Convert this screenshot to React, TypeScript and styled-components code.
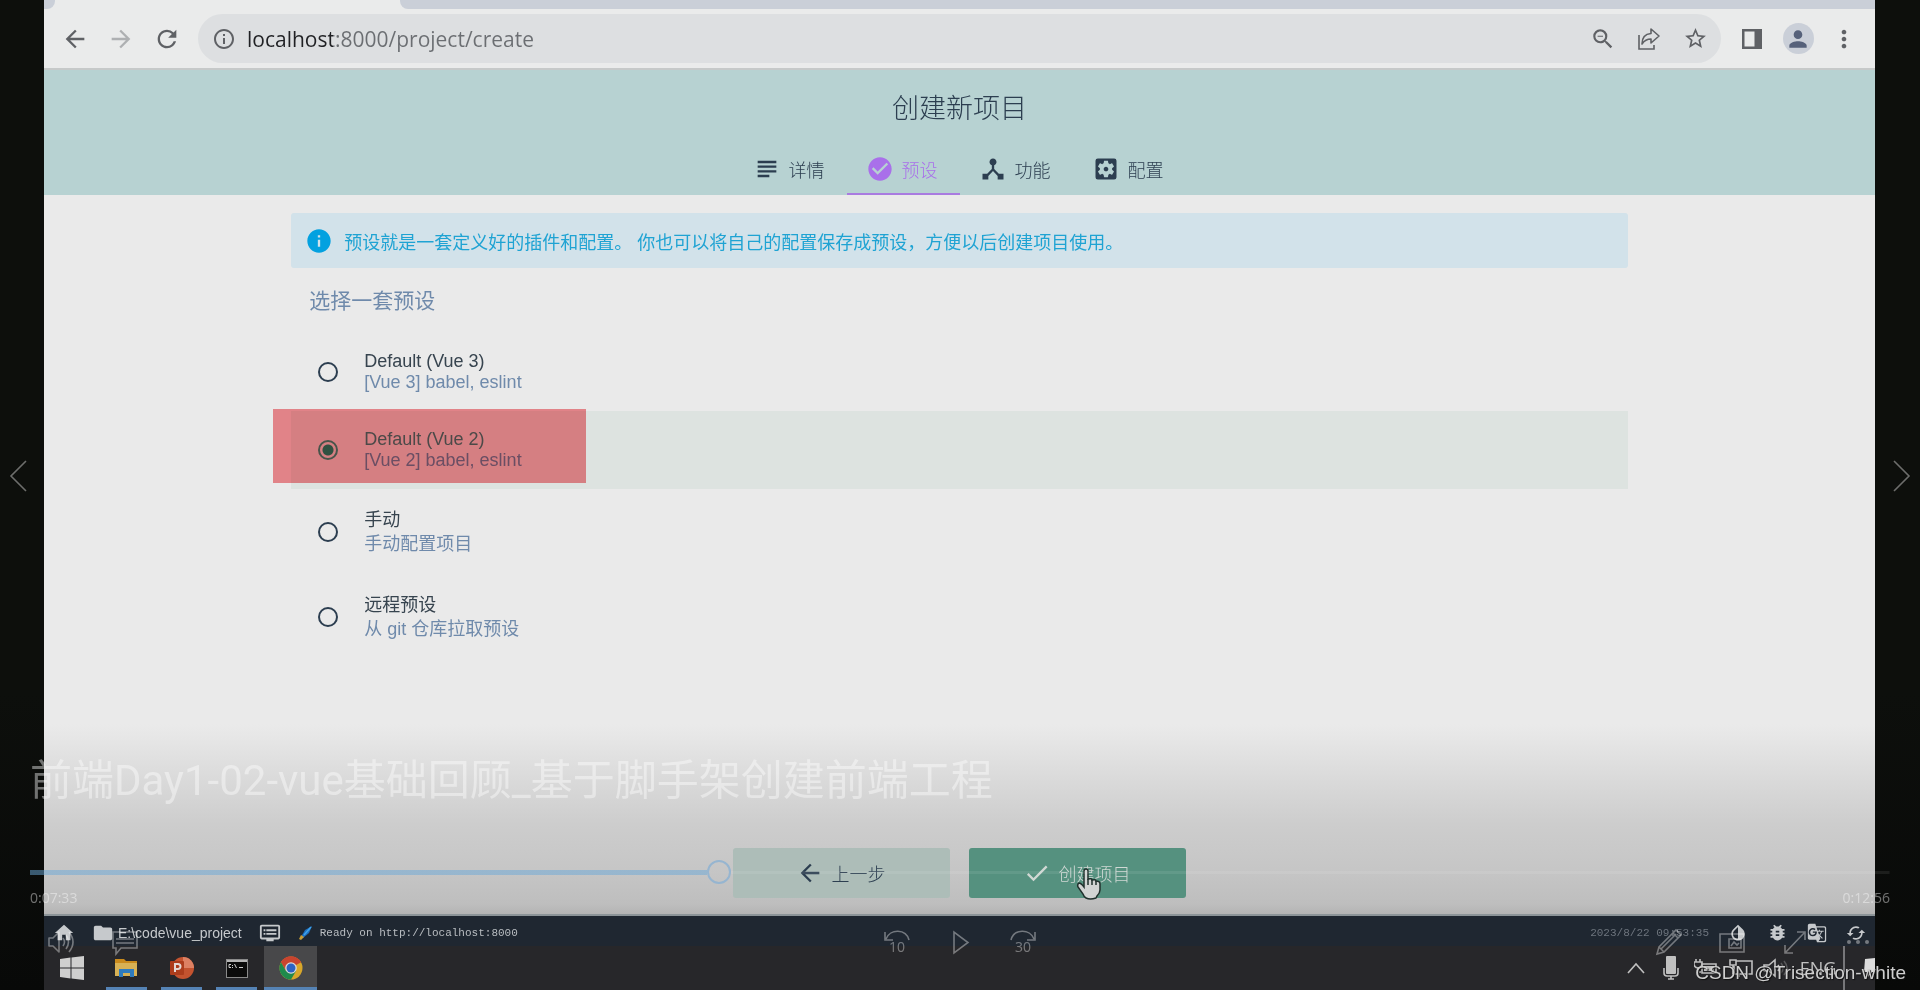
import React, { useState } from "react";
import styled, { createGlobalStyle } from "styled-components";
import {
  MdArrowBack,
  MdArrowForward,
  MdRefresh,
  MdInfoOutline,
  MdZoomOut,
  MdStarOutline,
  MdPerson,
  MdMoreVert,
  MdSubject,
  MdCheckCircle,
  MdDeviceHub,
  MdSettingsApplications,
  MdInfo,
  MdDone,
  MdHome,
  MdFolder,
  MdDvr,
  MdInvertColors,
  MdBugReport,
  MdGTranslate,
  MdCached,
} from "react-icons/md";

const sans = `"Liberation Sans", "Noto Sans CJK SC", sans-serif`;
const segoe = `"Open Sans", "Noto Sans CJK SC", sans-serif`;
const mono = `"Liberation Mono", monospace`;

const GlobalStyle = createGlobalStyle`
  *, *::before, *::after { box-sizing: border-box; }
  body { margin: 0; background: #0b0d0a; }
  button, input { margin: 0; padding: 0; border: 0; background: none; font: inherit; color: inherit; }
  a { color: inherit; text-decoration: none; }
  h1, h2, p { margin: 0; font-weight: 400; }
  svg { display: block; flex: none; }
`;

/* ---------- player stage ---------- */

const Stage = styled.div`
  position: relative;
  display: flex;
  flex-direction: column;
  min-height: 100vh;
  padding: 0 45px 0 44px;
  overflow: hidden;
  background: linear-gradient(#0d0f0c 0, #0d0f0c 70%, #080908 100%);
  font-family: ${sans};
  font-size: 18px;
  color: #2c3e50;
`;

/* ---------- browser chrome ---------- */

const TabStrip = styled.div`
  display: flex;
  justify-content: space-between;
  height: 9px;
  background: #eaebeb;
`;

const TabStripStub = styled.div`
  width: 11px;
  border-radius: 0 0 8px 0;
  background: #cacfd8;
`;

const TabStripRest = styled.div`
  flex: 1;
  margin-left: 345px;
  border-radius: 0 0 0 8px;
  background: #cacfd8;
`;

const Toolbar = styled.div`
  display: flex;
  align-items: center;
  gap: 8px;
  padding: 5px 8px;
  border-bottom: 2px solid #c6c9c9;
  background: #eaebeb;
  color: #5f6165;
`;

const ToolGroup = styled.div`
  display: flex;
`;

const ToolButton = styled.button<{ $faded?: boolean }>`
  display: flex;
  align-items: center;
  justify-content: center;
  width: 46px;
  height: 49px;
  color: ${(p) => (p.$faded ? "#aeb0b2" : "#5f6165")};
`;

const AddressBar = styled.form`
  display: flex;
  flex: 1;
  align-items: center;
  gap: 11px;
  height: 49px;
  padding: 0 3px 0 14px;
  border-radius: 25px;
  background: #dddfe1;
`;

const AddressInput = styled.input`
  flex: 1;
  min-width: 0;
  height: 30px;
  outline: none;
  font-family: ${segoe};
  font-size: 21px;
  color: #5f6165;
  background: linear-gradient(90deg, #202124 0, #202124 86px, #6b6e72 86px);
  background-clip: text;
  -webkit-background-clip: text;
  -webkit-text-fill-color: transparent;
`;

const Avatar = styled.span`
  display: flex;
  align-items: center;
  justify-content: center;
  width: 31px;
  height: 31px;
  border-radius: 50%;
  background: #cacfd8;
  color: #56617a;
`;

/* ---------- project creation page ---------- */

const Page = styled.main`
  display: flex;
  flex: 1;
  flex-direction: column;
  background: #eaeaea;
`;

const PageHeader = styled.header`
  display: flex;
  flex-direction: column;
  align-items: center;
  gap: 16px;
  padding-top: 19px;
  background: #b7d2d2;
`;

const PageTitle = styled.h1`
  font-size: 27px;
  font-weight: 300;
  line-height: 40px;
`;

const StepTabs = styled.nav`
  display: flex;
`;

const StepTab = styled.a<{ $active?: boolean }>`
  display: flex;
  align-items: center;
  gap: 8px;
  height: 50px;
  padding: 0 22px 0 19px;
  border-bottom: 2px solid ${(p) => (p.$active ? "#a97be0" : "transparent")};
  color: ${(p) => (p.$active ? "#a970ea" : "#2c3e50")};
  font-weight: 300;
`;

const PageBody = styled.form`
  display: flex;
  flex: 1;
  flex-direction: column;
  padding: 18px 0 16px;
  border-bottom: 2px solid #8c9498;
  background: linear-gradient(
    to top,
    #b4b4b4 0,
    #bebebe 10px,
    #c6c6c6 45px,
    #cdcdcd 90px,
    #dadada 135px,
    #e6e6e6 175px,
    #eaeaea 190px
  );
`;

const Column = styled.div`
  align-self: center;
  width: 73%;
`;

const Banner = styled.p`
  display: flex;
  align-items: center;
  gap: 11px;
  height: 55px;
  padding: 0 14px;
  border-radius: 3px;
  background: #d2e2ea;
  color: #1fa3d3;
`;

const BannerIcon = styled(MdInfo)`
  color: #03a1e0;
`;

const SectionTitle = styled.h2`
  margin: 18px 18px 17px;
  font-size: 21px;
  line-height: 30px;
  color: #6f8aab;
`;

const PresetRow = styled.label<{ $selected: boolean }>`
  position: relative;
  display: flex;
  align-items: center;
  gap: 26px;
  padding: 18px 27px;
  background: ${(p) => (p.$selected ? "#dde3e0" : "transparent")};
  color: ${(p) => (p.$selected ? "#4f827c" : "#37444f")};
  cursor: pointer;
`;

const Radio = styled.input`
  width: 20px;
  height: 20px;
  border: 2px solid #2c3e50;
  border-radius: 50%;
  appearance: none;
  &:checked {
    border-color: #4b9680;
    background: radial-gradient(circle, #319070 5px, transparent 6px);
  }
`;

const PresetText = styled.span<{ $cjk?: boolean }>`
  display: flex;
  flex-direction: column;
  padding-top: ${(p) => (p.$cjk ? 1 : 0)}px;
  line-height: ${(p) => (p.$cjk ? 24 : 21)}px;
`;

const PresetDetail = styled.span`
  color: #6f8aab;
`;

const Marker = styled.span`
  position: absolute;
  top: -2px;
  left: -18px;
  width: 313px;
  height: 74px;
  background: #f68f94;
  mix-blend-mode: multiply;
  pointer-events: none;
`;

const Actions = styled.div`
  display: flex;
  flex-wrap: wrap;
  justify-content: center;
  gap: 19px;
  margin-top: auto;
`;

const ActionButton = styled.button<{ $primary?: boolean }>`
  position: relative;
  display: flex;
  align-items: center;
  justify-content: center;
  gap: 8px;
  width: 217px;
  height: 50px;
  padding-right: 2px;
  border-radius: 3px;
  background: ${(p) => (p.$primary ? "#55917f" : "#adbdb8")};
  color: ${(p) => (p.$primary ? "#d0d8d4" : "#2c3e50")};
  font-weight: 300;
`;

const PointerHand = styled.svg`
  position: absolute;
  top: 20px;
  left: 107px;
`;

/* ---------- Vue UI status bar ---------- */

const StatusBar = styled.footer`
  display: flex;
  align-items: center;
  justify-content: space-between;
  height: 30px;
  padding: 3px 9px 0;
  background: #1f2731;
  color: #c6c9cc;
`;

const StatusGroup = styled.div<{ $gap: number }>`
  display: flex;
  align-items: center;
  gap: ${(p) => p.$gap}px;
`;

const StatusPath = styled.a`
  display: flex;
  align-items: center;
  gap: 4px;
  font-size: 14px;
  line-height: 20px;
`;

const StatusLog = styled.span<{ $dim?: boolean }>`
  display: flex;
  align-items: center;
  gap: 7px;
  font-family: ${mono};
  font-size: 11px;
  line-height: 20px;
  color: ${(p) => (p.$dim ? "#6d747d" : "#b9bdc1")};
`;

/* ---------- Windows taskbar ---------- */

const Taskbar = styled.div`
  display: flex;
  justify-content: space-between;
  height: 44px;
  background: #27272a;
`;

const TaskList = styled.div`
  display: flex;
`;

const TaskButton = styled.button<{ $open?: boolean; $active?: boolean }>`
  display: flex;
  align-items: center;
  justify-content: center;
  width: ${(p) => (p.$active ? 53 : 55)}px;
  background: ${(p) => (p.$active ? "#48484a" : "transparent")};
  background-image: ${(p) => (p.$open ? "linear-gradient(#5583b5, #5583b5)" : "none")};
  background-repeat: no-repeat;
  background-position: center bottom;
  background-size: ${(p) => (p.$active ? "100%" : "41px")} 3px;
`;

const Tray = styled.div`
  display: flex;
  align-items: center;
  color: #c0c0c0;
`;

const TrayItem = styled.span<{ $wide?: boolean }>`
  display: flex;
  align-items: center;
  justify-content: center;
  width: ${(p) => (p.$wide ? 50 : 35)}px;
  font-family: ${segoe};
`;

const TrayEnd = styled.span`
  display: flex;
  align-items: center;
  justify-content: flex-end;
  width: 32px;
  height: 100%;
  border-left: 2px solid #77777a;
`;

/* ---------- player controls over the video ---------- */

const SideArrow = styled.button<{ $side: "left" | "right" }>`
  position: absolute;
  top: calc(50% - 36px);
  ${(p) => p.$side}: 8px;
  color: #6d6e6c;
`;

const PlayerOverlay = styled.section`
  position: absolute;
  right: 0;
  bottom: 0;
  left: 0;
  padding: 0 30px 32px;
  font-family: ${segoe};
  color: rgba(255, 255, 255, 0.42);
  pointer-events: none;
`;

const VideoTitle = styled.h2`
  font-family: Roboto, "Noto Sans CJK SC", sans-serif;
  font-size: 42px;
  line-height: 60px;
`;

const Seek = styled.input`
  display: block;
  width: 100%;
  height: 24px;
  margin-top: 49px;
  appearance: none;
  background:
    linear-gradient(rgba(106, 168, 216, 0.5), rgba(106, 168, 216, 0.5)) left center /
      calc((100% - 24px) * 0.369) 5px no-repeat,
    linear-gradient(rgba(255, 255, 255, 0.08), rgba(255, 255, 255, 0.08)) right center /
      calc((100% - 24px) * 0.631) 3px no-repeat;
  &::-webkit-slider-thumb {
    width: 24px;
    height: 24px;
    border: 2px solid #96b5d0;
    border-radius: 50%;
    appearance: none;
  }
`;

const Times = styled.div`
  display: flex;
  justify-content: space-between;
  margin-top: 4px;
  font-size: 14px;
  line-height: 20px;
`;

const Controls = styled.div`
  display: grid;
  grid-template-columns: 1fr auto 1fr;
  height: 32px;
  margin-top: 18px;
  padding: 0 18px;
`;

const ControlGroup = styled.div<{ $align?: string }>`
  display: flex;
  align-items: center;
  justify-content: ${(p) => p.$align ?? "flex-start"};
  gap: 35px;
`;

const ControlButton = styled.button`
  position: relative;
  width: 28px;
  height: 28px;
  color: rgba(255, 255, 255, 0.38);
`;

const SkipLabel = styled.span`
  position: absolute;
  right: 0;
  bottom: 1px;
  left: 0;
  font-size: 14px;
  line-height: 16px;
  text-align: center;
`;

const Watermark = styled.span`
  position: absolute;
  right: 14px;
  bottom: 6px;
  font-size: 19px;
  line-height: 22px;
  color: #cfcfcf;
  text-shadow: 1px 1px 1px #111;
`;

/* ---------- drawings ---------- */

const line = { fill: "none", stroke: "currentColor", strokeWidth: 1.6 } as const;

const ShareIcon = () => (
  <svg width="24" height="24" viewBox="0 0 24 24" {...line}>
    <path d="M2 8v14h15v-4" />
    <path d="M14 2l8 7-8 7v-4c-5 0-7 2-9 5 0-6 3-10 9-10.500z" strokeLinejoin="round" />
  </svg>
);

const SidePanelIcon = () => (
  <svg width="22" height="20" viewBox="0 0 22 20">
    <path d="M1 0h20v20H1z M3.500 2.500v15h10v-15z" fill="currentColor" fillRule="evenodd" />
  </svg>
);

const HandIcon = () => (
  <PointerHand width="26" height="32" viewBox="0 0 26 32">
    <path
      d="M8 3q0-2 2-2t2 2v8q4-1 4 1 4-1 4 1 4 0 4 3v6q0 3-3 6l-1 2q-6 2-10 0-2-1-3-4l-5-7q-1-3 1-4 2 0 5 4z"
      fill="#d2d4d3"
      stroke="#20302c"
      strokeWidth="1.500"
    />
    <path d="M12 11v6M16 12v5M20 13v4" stroke="#20302c" strokeWidth="1.500" />
  </PointerHand>
);

const PlumeIcon = () => (
  <svg width="15" height="16" viewBox="0 0 15 16">
    <path d="M14 1L7 5l-4 7 2 1 6-5z" fill="#1e6fc0" />
    <path d="M13 2L6 10" stroke="#3fa2e8" strokeWidth="1.500" />
    <path d="M3 10l3 2-3 3-2-1z" fill="#c89c33" />
  </svg>
);

const WindowsLogo = () => (
  <svg width="24" height="24" viewBox="0 0 24 24" fill="#cfcfcf">
    <path d="M0 3l10.500-1.500v10H0zM11.500 1.400L24 0v11.500H11.500zM0 12.500h10.500v10L0 21zM11.500 12.500H24V24l-12.500-1.500z" />
  </svg>
);

const ExplorerIcon = () => (
  <svg width="23" height="20" viewBox="0 0 23 20">
    <path d="M0 1h9l2 2h11v4H0z" fill="#c98a1c" />
    <path d="M0 5h22v13H0z" fill="#d7b155" />
    <path d="M4 11h15v8h-4v-4H8v4H4z" fill="#2f7bbd" />
  </svg>
);

const SlidesIcon = () => (
  <svg width="24" height="24" viewBox="0 0 24 24">
    <circle cx="13" cy="12" r="11" fill="#c4532f" />
    <path d="M13 1a11 11 0 0 1 11 11H13z" fill="#dd8163" />
    <rect y="5" width="14" height="14" rx="1" fill="#ad3d1c" />
    <path d="M5 16V8h3a2.500 2.500 0 0 1 0 5H5" fill="none" stroke="#e4d8d3" strokeWidth="2" />
  </svg>
);

const ConsoleIcon = () => (
  <svg width="22" height="19" viewBox="0 0 22 19">
    <rect x=".5" y=".5" width="21" height="18" fill="#0b0b0b" stroke="#8a8a8a" />
    <path d="M1 2h20" stroke="#b5b5b5" strokeWidth="2" />
    <path d="M5 5.500H3v3h2M6.500 6v1M6.500 8v1M8.500 5l2 4M13 8.500h4" stroke="#cfcfcf" fill="none" />
  </svg>
);

const ChromeIcon = () => (
  <svg width="24" height="24" viewBox="0 0 24 24">
    <circle cx="12" cy="12" r="11.500" fill="#d8a72b" />
    <path d="M12 12L2 6.200A11.500 11.500 0 0 1 22 6.200z" fill="#c8442f" />
    <path d="M12 6.200h10A11.500 11.500 0 0 0 2 6.200l5 8.700z" fill="#c8442f" />
    <path d="M2 6.200A11.500 11.500 0 0 0 12 23.500l5-8.600L12 12l-5 3z" fill="#1f8a4c" />
    <circle cx="12" cy="12" r="5.800" fill="#dcdcdc" />
    <circle cx="12" cy="12" r="4.500" fill="#2c63c4" />
  </svg>
);

const ChevronUpIcon = () => (
  <svg width="18" height="12" viewBox="0 0 18 12" {...line}>
    <path d="M1 11l8-9 8 9" />
  </svg>
);

const MicIcon = () => (
  <svg width="16" height="24" viewBox="0 0 16 24">
    <rect x="3" width="10" height="18" rx="1" fill="currentColor" />
    <path d="M1 12v5q0 3 3 3h8q3 0 3-3v-5M8 20v3M5 23h6" {...line} />
  </svg>
);

const BatteryIcon = () => (
  <svg width="24" height="20" viewBox="0 0 24 20">
    <path d="M2 1v3M6 1v3M0 4h8v3q-1 3-4 3t-4-3zM4 10v4h3" {...line} />
    <path d="M8 6h14v9H8z" {...line} />
    <path d="M10 8h10v5H10z" fill="currentColor" />
  </svg>
);

const DisplayIcon = () => (
  <svg width="24" height="20" viewBox="0 0 24 20" {...line}>
    <path d="M7 3h16v13H5V8M1 2h6v5H1zM4 7v9M10 16v3" />
  </svg>
);

const SpeakerIcon = () => (
  <svg width="26" height="20" viewBox="0 0 26 20" {...line}>
    <path d="M1 7h5l6-5v16l-6-5H1z" />
    <path d="M15 7q2 3 0 6" />
    <path d="M18 5q4 5 0 10M21 3q6 7 0 14" stroke="#58585a" />
  </svg>
);

const NoticeIcon = () => (
  <svg width="11" height="20" viewBox="0 0 11 20" fill="#dcdcdc">
    <path d="M1 1l10-1v14H8l-4 5v-5H0z" />
  </svg>
);

const VolumeIcon = () => (
  <svg width="28" height="28" viewBox="0 0 28 28" {...line}>
    <path d="M1 10h4l6-6v20l-6-6H1z" strokeLinejoin="round" />
    <path d="M15 10q3 4 0 8M18 7q5 7 0 14M21 4q8 10 0 20" />
  </svg>
);

const CommentIcon = () => (
  <svg width="28" height="28" viewBox="0 0 28 28" {...line}>
    <path d="M2 4h24v16H10l-5 6v-6H2zM5 11h18M5 15h18" />
  </svg>
);

const SkipArc = ({ forward = false }: { forward?: boolean }) => (
  <svg width="28" height="28" viewBox="0 0 28 28" {...line}>
    {forward ? (
      <path d="M2 12C5 .500 21 .500 25 11M26 4v8h-8" />
    ) : (
      <path d="M26 12C23 .500 7 .500 3 11M2 4v8h8" />
    )}
  </svg>
);

const PlayIcon = () => (
  <svg width="28" height="28" viewBox="0 0 28 28" {...line}>
    <path d="M8 4v21l14-10.500z" />
  </svg>
);

const PencilIcon = () => (
  <svg width="28" height="28" viewBox="0 0 28 28" {...line}>
    <path d="M2 26l2-7L21 2l5 5L9 24zM4 19l5 5M18 5l5 5M6 21L21 6" />
  </svg>
);

const PictureIcon = () => (
  <svg width="28" height="28" viewBox="0 0 28 28" {...line}>
    <path d="M2 6h24v18H2zM11 11h12v9H11zM13 18l3-4 3 3 2-2" />
  </svg>
);

const ExpandIcon = () => (
  <svg width="28" height="28" viewBox="0 0 28 28" {...line}>
    <path d="M4 25L24 4M16 4h8v8M4 17v8h8" />
  </svg>
);

const DotsIcon = () => (
  <svg width="28" height="28" viewBox="0 0 28 28" fill="currentColor">
    <circle cx="5" cy="14" r="2" />
    <circle cx="14" cy="14" r="2" />
    <circle cx="23" cy="14" r="2" />
  </svg>
);

/* ---------- data ---------- */

const steps = [
  { label: "详情", Icon: MdSubject },
  { label: "预设", Icon: MdCheckCircle },
  { label: "功能", Icon: MdDeviceHub },
  { label: "配置", Icon: MdSettingsApplications },
];

const presets = [
  { id: "vue3", name: "Default (Vue 3)", detail: "[Vue 3] babel, eslint" },
  { id: "vue2", name: "Default (Vue 2)", detail: "[Vue 2] babel, eslint", marked: true },
  { id: "manual", name: "手动", detail: "手动配置项目", cjk: true },
  { id: "remote", name: "远程预设", detail: "从 git 仓库拉取预设", cjk: true },
];

export default function App() {
  const [preset, setPreset] = useState("vue2");

  return (
    <Stage>
      <GlobalStyle />

      <TabStrip>
        <TabStripStub />
        <TabStripRest />
      </TabStrip>
      <Toolbar>
        <ToolGroup>
          <ToolButton aria-label="后退"><MdArrowBack size={28} /></ToolButton>
          <ToolButton aria-label="前进" $faded><MdArrowForward size={28} /></ToolButton>
          <ToolButton aria-label="刷新"><MdRefresh size={28} /></ToolButton>
        </ToolGroup>
        <AddressBar onSubmit={(e) => e.preventDefault()}>
          <MdInfoOutline size={24} />
          <AddressInput aria-label="地址" defaultValue="localhost:8000/project/create" />
          <ToolGroup>
            <ToolButton type="button" aria-label="缩小"><MdZoomOut size={26} /></ToolButton>
            <ToolButton type="button" aria-label="分享"><ShareIcon /></ToolButton>
            <ToolButton type="button" aria-label="收藏"><MdStarOutline size={25} /></ToolButton>
          </ToolGroup>
        </AddressBar>
        <ToolGroup>
          <ToolButton aria-label="侧边栏"><SidePanelIcon /></ToolButton>
          <ToolButton aria-label="用户"><Avatar><MdPerson size={26} /></Avatar></ToolButton>
          <ToolButton aria-label="菜单"><MdMoreVert size={28} /></ToolButton>
        </ToolGroup>
      </Toolbar>

      <Page>
        <PageHeader>
          <PageTitle>创建新项目</PageTitle>
          <StepTabs>
            {steps.map(({ label, Icon }, i) => (
              <StepTab key={label} href="#" $active={i === 1}>
                <Icon size={28} />
                {label}
              </StepTab>
            ))}
          </StepTabs>
        </PageHeader>

        <PageBody onSubmit={(e) => e.preventDefault()}>
          <Column>
            <Banner>
              <BannerIcon size={28} />
              预设就是一套定义好的插件和配置。 你也可以将自己的配置保存成预设，方便以后创建项目使用。
            </Banner>
            <SectionTitle>选择一套预设</SectionTitle>
            {presets.map((p) => (
              <PresetRow key={p.id} $selected={preset === p.id}>
                <Radio
                  type="radio"
                  name="preset"
                  checked={preset === p.id}
                  onChange={() => setPreset(p.id)}
                />
                <PresetText $cjk={p.cjk}>
                  <span>{p.name}</span>
                  <PresetDetail>{p.detail}</PresetDetail>
                </PresetText>
                {p.marked && <Marker />}
              </PresetRow>
            ))}
          </Column>
          <Actions>
            <ActionButton type="button"><MdArrowBack size={28} />上一步</ActionButton>
            <ActionButton type="submit" $primary>
              <MdDone size={28} />创建项目
              <HandIcon />
            </ActionButton>
          </Actions>
        </PageBody>
      </Page>

      <StatusBar>
        <StatusGroup $gap={17}>
          <MdHome size={22} />
          <StatusPath href="#"><MdFolder size={22} />E:\code\vue_project</StatusPath>
          <MdDvr size={22} />
          <StatusLog><PlumeIcon />Ready on http://localhost:8000</StatusLog>
        </StatusGroup>
        <StatusGroup $gap={19}>
          <StatusLog $dim>2023/8/22 09:53:35</StatusLog>
          <MdInvertColors size={20} />
          <MdBugReport size={21} />
          <MdGTranslate size={20} />
          <MdCached size={20} />
        </StatusGroup>
      </StatusBar>
      <Taskbar>
        <TaskList>
          <TaskButton aria-label="开始"><WindowsLogo /></TaskButton>
          <TaskButton aria-label="文件资源管理器" $open><ExplorerIcon /></TaskButton>
          <TaskButton aria-label="演示文稿" $open><SlidesIcon /></TaskButton>
          <TaskButton aria-label="命令提示符" $open><ConsoleIcon /></TaskButton>
          <TaskButton aria-label="浏览器" $open $active><ChromeIcon /></TaskButton>
        </TaskList>
        <Tray>
          <TrayItem><ChevronUpIcon /></TrayItem>
          <TrayItem><MicIcon /></TrayItem>
          <TrayItem><BatteryIcon /></TrayItem>
          <TrayItem><DisplayIcon /></TrayItem>
          <TrayItem><SpeakerIcon /></TrayItem>
          <TrayItem $wide>ENG</TrayItem>
          <TrayEnd><NoticeIcon /></TrayEnd>
        </Tray>
      </Taskbar>

      <SideArrow $side="left" aria-label="上一个">
        <svg width="20" height="34" viewBox="0 0 20 34" {...line}><path d="M18 2L3 17l15 15" /></svg>
      </SideArrow>
      <SideArrow $side="right" aria-label="下一个">
        <svg width="20" height="34" viewBox="0 0 20 34" {...line}><path d="M2 2l15 15L2 32" /></svg>
      </SideArrow>

      <PlayerOverlay>
        <VideoTitle>前端Day1-02-vue基础回顾_基于脚手架创建前端工程</VideoTitle>
        <Seek type="range" aria-label="播放进度" min={0} max={1000} defaultValue={369} />
        <Times>
          <span>0:07:33</span>
          <span>0:12:56</span>
        </Times>
        <Controls>
          <ControlGroup>
            <ControlButton aria-label="音量"><VolumeIcon /></ControlButton>
            <ControlButton aria-label="字幕"><CommentIcon /></ControlButton>
          </ControlGroup>
          <ControlGroup>
            <ControlButton><SkipArc /><SkipLabel>10</SkipLabel></ControlButton>
            <ControlButton aria-label="播放"><PlayIcon /></ControlButton>
            <ControlButton><SkipArc forward /><SkipLabel>30</SkipLabel></ControlButton>
          </ControlGroup>
          <ControlGroup $align="flex-end">
            <ControlButton aria-label="编辑"><PencilIcon /></ControlButton>
            <ControlButton aria-label="迷你视图"><PictureIcon /></ControlButton>
            <ControlButton aria-label="全屏"><ExpandIcon /></ControlButton>
            <ControlButton aria-label="更多"><DotsIcon /></ControlButton>
          </ControlGroup>
        </Controls>
      </PlayerOverlay>
      <Watermark>CSDN @Trisection-white</Watermark>
    </Stage>
  );
}
